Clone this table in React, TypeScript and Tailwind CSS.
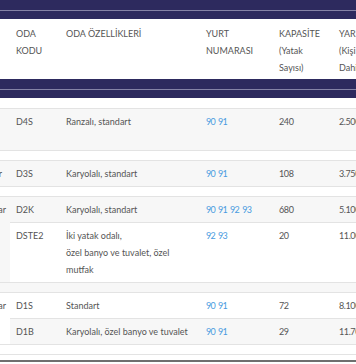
import React from 'react';

type Row = {
  code: string;
  desc: string[];
  yurt: string[];
  cap: string;
  price: string;
  rowBg: string;
};

type Group = {
  cat: string;
  catGap: string;
  bg: string;
  gapBg: string;
  minH: string;
  rows: Row[];
};

const GROUPS: Group[] = [
  {
    cat: 'Dört Kişilik Odalar',
    catGap: 'mr-[14px]',
    bg: 'bg-[#f7f7f7]',
    gapBg: 'bg-white',
    minH: 'min-h-[43px]',
    rows: [
      { code: 'D4S', desc: ['Ranzalı, standart'], yurt: ['90', '91'], cap: '240', price: '2.500 TL', rowBg: 'bg-[#f7f7f7]' },
    ],
  },
  {
    cat: 'Üç Kişilik Odalar',
    catGap: 'mr-[8px]',
    bg: 'bg-[#f7f7f7]',
    gapBg: 'bg-white',
    minH: 'min-h-0',
    rows: [
      { code: 'D3S', desc: ['Karyolalı, standart'], yurt: ['90', '91'], cap: '108', price: '3.750 TL', rowBg: 'bg-[#f7f7f7]' },
    ],
  },
  {
    cat: 'İki Kişilik Odalar',
    catGap: 'mr-[4px]',
    bg: 'bg-[#f7f7f7]',
    gapBg: 'bg-[#f7f7f7]',
    minH: 'min-h-0',
    rows: [
      { code: 'D2K', desc: ['Karyolalı, standart'], yurt: ['90', '91', '92', '93'], cap: '680', price: '5.100 TL', rowBg: 'bg-[#f7f7f7]' },
      { code: 'DSTE2', desc: ['İki yatak odalı,', 'özel banyo ve tuvalet, özel', 'mutfak'], yurt: ['92', '93'], cap: '20', price: '11.000 TL', rowBg: 'bg-white' },
    ],
  },
  {
    cat: 'Tek Kişilik Odalar',
    catGap: 'mr-[4px]',
    bg: 'bg-white',
    gapBg: 'bg-white',
    minH: 'min-h-0',
    rows: [
      { code: 'D1S', desc: ['Standart'], yurt: ['90', '91'], cap: '72', price: '8.100 TL', rowBg: 'bg-white' },
      { code: 'D1B', desc: ['Karyolalı, özel banyo ve tuvalet'], yurt: ['90', '91'], cap: '29', price: '11.700 TL', rowBg: 'bg-[#f7f7f7]' },
    ],
  },
];

function NavyBar() {
  return (
    <div className="bg-[#2d2a5e]">
      <div className="h-[10px]" />
      <div className="h-px bg-[#8583a6]" />
      <div className="h-[8px]" />
    </div>
  );
}

export default function App() {
  return (
    <div
      className="w-[356px] h-[364px] overflow-hidden bg-white text-[9px] leading-[17px] text-[#555]"
      style={{ fontFamily: 'Lato, "Liberation Sans", sans-serif' }}
    >
      <div className="w-[430px]">
        <NavyBar />

        {/* header */}
        <div className="flex h-[60px] pt-[6px] uppercase text-[#555]">
          <div className="w-[10px]" />
          <div className="w-[50px] pl-[6px]">Oda<br />Kodu</div>
          <div className="w-[140px] pl-[6px]">Oda Özellİklerİ</div>
          <div className="w-[73px] pl-[6px]">Yurt<br />Numarası</div>
          <div className="w-[60px] pl-[6px]">Kapasİte<br /><span className="normal-case">(Yatak<br />Sayısı)</span></div>
          <div className="w-[97px] pl-[6px] whitespace-nowrap">Yarıyıl Ücretİ<br /><span className="normal-case">(Kişi Başı, KDV<br />Dahil)</span></div>
        </div>

        <NavyBar />
        <div className="h-[10px]" />

        {GROUPS.map((g) => (
          <div key={g.cat}>
            <div className={`flex border-y border-[#e3e3e3] ${g.bg} ${g.minH}`}>
              <div className="w-[10px] shrink-0 overflow-hidden flex justify-end py-1">
                <span className={`whitespace-nowrap ${g.catGap}`}>{g.cat}</span>
              </div>
              <div className="flex-1">
                {g.rows.map((r, i) => (
                  <div key={r.code} className={`flex py-1 ${r.rowBg} ${i > 0 ? 'border-t border-[#e3e3e3]' : ''}`}>
                    <div className="w-[50px] pl-[6px]">{r.code}</div>
                    <div className="w-[140px] pl-[6px]">
                      {r.desc.map((d) => (
                        <div key={d}>{d}</div>
                      ))}
                    </div>
                    <div className="w-[73px] pl-[6px] flex gap-[3px] text-[#4a9be0] whitespace-nowrap tracking-[-0.7px]">
                      {r.yurt.map((y) => (
                        <a key={y} href="#">{y}</a>
                      ))}
                    </div>
                    <div className="w-[60px] pl-[6px] tracking-[-0.4px]">{r.cap}</div>
                    <div className="w-[97px] pl-[6px] whitespace-nowrap tracking-[-0.4px]">{r.price}</div>
                  </div>
                ))}
              </div>
            </div>
            <div className={`h-[9px] ${g.gapBg}`} />
          </div>
        ))}

        <div className="border-t border-[#e3e3e3] h-[6px]" />
        <div className="h-[2px] bg-[#6f6f6f]" />
      </div>
    </div>
  );
}
